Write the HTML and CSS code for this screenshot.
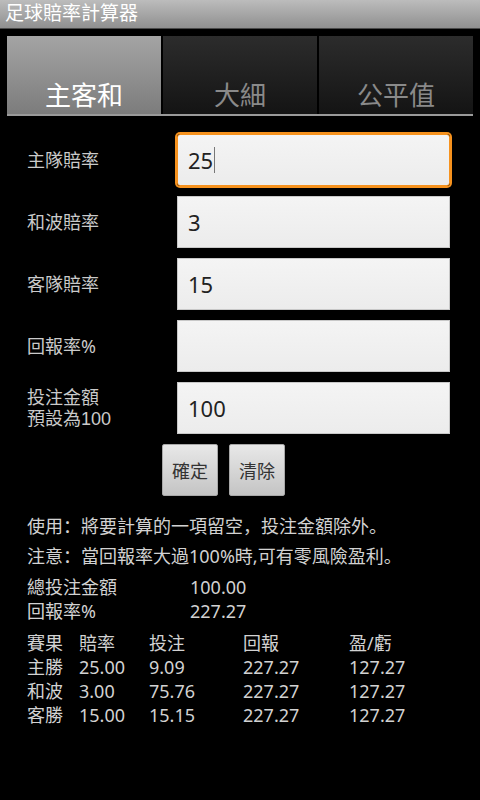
FILE: index.html
```html
<!DOCTYPE html>
<html>
<head>
<meta charset="utf-8">
<link rel="stylesheet" href="styles.css">
</head>
<body>
<div class="titlebar">足球賠率計算器</div>
<div class="tabs">
  <div class="tab active">主客和</div>
  <div class="tab">大細</div>
  <div class="tab">公平值</div>
</div>
<div class="form">
  <div class="row"><div class="label">主隊賠率</div><div class="field focused">25<span class="caret"></span></div></div>
  <div class="row"><div class="label">和波賠率</div><div class="field">3</div></div>
  <div class="row"><div class="label">客隊賠率</div><div class="field">15</div></div>
  <div class="row"><div class="label">回報率%</div><div class="field"></div></div>
  <div class="row"><div class="label two"><div>投注金額</div><div>預設為100</div></div><div class="field">100</div></div>
  <div class="buttons">
    <div class="btn">確定</div>
    <div class="btn">清除</div>
  </div>
</div>
<div class="info">
  <div class="note">使用：將要計算的一項留空，投注金額除外。</div>
  <div class="note">注意：當回報率大過100%時,可有零風險盈利。</div>
  <div class="summary">
    <div class="srow"><span class="sk">總投注金額</span><span>100.00</span></div>
    <div class="srow"><span class="sk">回報率%</span><span>227.27</span></div>
  </div>
  <div class="table">
    <div class="trow"><span class="c1">賽果</span><span class="c2">賠率</span><span class="c3">投注</span><span class="c4">回報</span><span>盈/虧</span></div>
    <div class="trow"><span class="c1">主勝</span><span class="c2">25.00</span><span class="c3">9.09</span><span class="c4">227.27</span><span>127.27</span></div>
    <div class="trow"><span class="c1">和波</span><span class="c2">3.00</span><span class="c3">75.76</span><span class="c4">227.27</span><span>127.27</span></div>
    <div class="trow"><span class="c1">客勝</span><span class="c2">15.00</span><span class="c3">15.15</span><span class="c4">227.27</span><span>127.27</span></div>
  </div>
</div>
</body>
</html>
```

FILE: styles.css
```css
html, body {
  margin: 0;
  padding: 0;
  background: #000;
  width: 480px;
  height: 800px;
  overflow: hidden;
  font-family: "Noto Sans", "Noto Sans CJK SC", sans-serif;
}
.titlebar {
  height: 29px;
  line-height: 27px;
  padding-left: 5px;
  color: #fff;
  font-size: 19px;
  background: linear-gradient(#bcbcbc, #909090);
  border-bottom: 1px solid #4a4a4a;
  box-sizing: border-box;
}
.tabs {
  margin: 7px 7px 0;
  height: 78px;
  display: flex;
  border-bottom: 2px solid #9a9a9a;
  gap: 2px;
}
.tab {
  flex: 1;
  display: flex;
  align-items: flex-end;
  justify-content: center;
  padding-bottom: 1px;
  box-sizing: border-box;
  font-size: 26px;
  line-height: 36px;
  color: #8a8a8a;
  background: linear-gradient(#2c2c2c, #141414);
}
.tab.active {
  color: #fff;
  background: linear-gradient(#a4a4a4, #7c7c7c);
}
.form {
  padding: 18px 0 0 27px;
  display: flex;
  flex-direction: column;
  gap: 10px;
}
.row {
  display: flex;
  align-items: center;
  height: 52px;
}
.label {
  width: 150px;
  color: #cacaca;
  font-size: 18px;
  line-height: 21px;
}
.label.two {
  font-family: "Liberation Sans", "Noto Sans CJK SC", sans-serif;
  line-height: 21px;
  padding-top: 2px;
}
.field {
  width: 273px;
  height: 52px;
  box-sizing: border-box;
  background: linear-gradient(#f4f4f4, #ececec);
  border: 1px solid #c8c8c8;
  padding-left: 10px;
  font-size: 22px;
  color: #222;
  display: flex;
  align-items: center;
}
.field.focused {
  box-shadow: 0 0 0 2px #f6921e;
  border-radius: 3px;
  border-color: #f6921e;
}
.caret {
  display: inline-block;
  width: 1px;
  height: 26px;
  background: #777;
  margin-left: 1px;
}
.buttons {
  display: flex;
  gap: 11px;
  padding-left: 135px;
}
.btn {
  width: 56px;
  height: 52px;
  box-sizing: border-box;
  background: linear-gradient(#e8e8e8, #c4c4c4);
  border: 1px solid #a8a8a8;
  border-radius: 2px;
  display: flex;
  align-items: center;
  justify-content: center;
  font-size: 18px;
  color: #333;
}
.info {
  padding: 15px 0 0 27px;
  color: #d2d2d2;
  font-size: 18px;
}
.note {
  line-height: 30px;
  white-space: nowrap;
}
.summary {
  margin-top: 4px;
}
.srow {
  line-height: 24px;
  display: flex;
}
.sk {
  width: 163px;
}
.table {
  margin-top: 8px;
}
.trow {
  display: flex;
  line-height: 24px;
  white-space: nowrap;
}
.c1 { width: 52px; }
.c2 { width: 70px; }
.c3 { width: 94px; }
.c4 { width: 106px; }
```
